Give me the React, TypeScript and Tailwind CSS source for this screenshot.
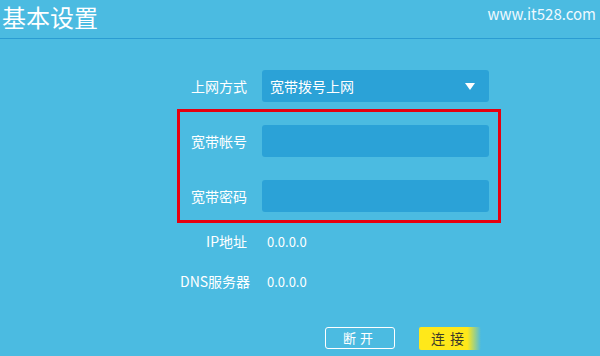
const FONT = "font-['Microsoft_YaHei','Noto_Sans_CJK_SC',sans-serif]";

function Row({ label, children }: { label: string; children: React.ReactNode }) {
  return (
    <div className="flex items-center gap-[15px]">
      <span className="w-[67px] shrink-0 whitespace-nowrap text-right text-[14px] text-white">{label}</span>
      {children}
    </div>
  );
}

export default function App() {
  return (
    <div className={`h-[356px] w-[600px] overflow-hidden bg-[#4bbbe1] ${FONT}`}>
      <header className="flex h-[39px] items-start justify-between border-b border-[#2b9cd2] px-[2px]">
        <h1 className="mt-[2px] text-[24px] leading-[30px] text-white">基本设置</h1>
        <span className="mr-[2px] mt-[4px] text-[15px] leading-[20px] text-[#eef9ff]">www.it528.com</span>
      </header>

      <div className="ml-[180px] w-[318px] pt-[31px]">
        <Row label="上网方式">
          <div className="flex h-[32px] w-[227px] items-center justify-between rounded-[3px] bg-[#2ba2d7] pl-[8px] pr-[14px]">
            <span className="text-[14px] text-white">宽带拨号上网</span>
            <svg width="10" height="7" viewBox="0 0 10 7">
              <path d="M0 0h10L5 7z" fill="#fff" />
            </svg>
          </div>
        </Row>

        <div className="-mx-[3px] mt-[7px] flex flex-col gap-[23px] border-[3px] border-[#e6000f] pb-[8px] pt-[13px]">
          <Row label="宽带帐号">
            <div className="h-[32px] w-[227px] rounded-[3px] bg-[#2ba2d7]" />
          </Row>
          <Row label="宽带密码">
            <div className="h-[32px] w-[227px] rounded-[3px] bg-[#2ba2d7]" />
          </Row>
        </div>

        <div className="mt-[8px] flex flex-col gap-[19px]">
          <Row label="IP地址">
            <span className="h-[20px] pl-[5px] text-[13px] leading-[20px] text-white">0.0.0.0</span>
          </Row>
          <Row label="DNS服务器">
            <span className="h-[20px] pl-[5px] text-[13px] leading-[20px] text-white">0.0.0.0</span>
          </Row>
        </div>
      </div>

      <div className="ml-[325px] mt-[35px] flex gap-[24px]">
        <button className="flex h-[22px] w-[70px] items-center justify-center rounded-[3px] border border-white text-[13px] tracking-[4px] text-white">
          断开
        </button>
        <button className="flex h-[23px] w-[62px] items-center justify-center rounded-[2px] bg-[linear-gradient(to_right,#ffe81a_0%,#ffe81a_78%,rgba(255,232,26,0)_100%)] text-[14px] tracking-[5px] text-[#3a3a2a]">
          连接
        </button>
      </div>
    </div>
  );
}
